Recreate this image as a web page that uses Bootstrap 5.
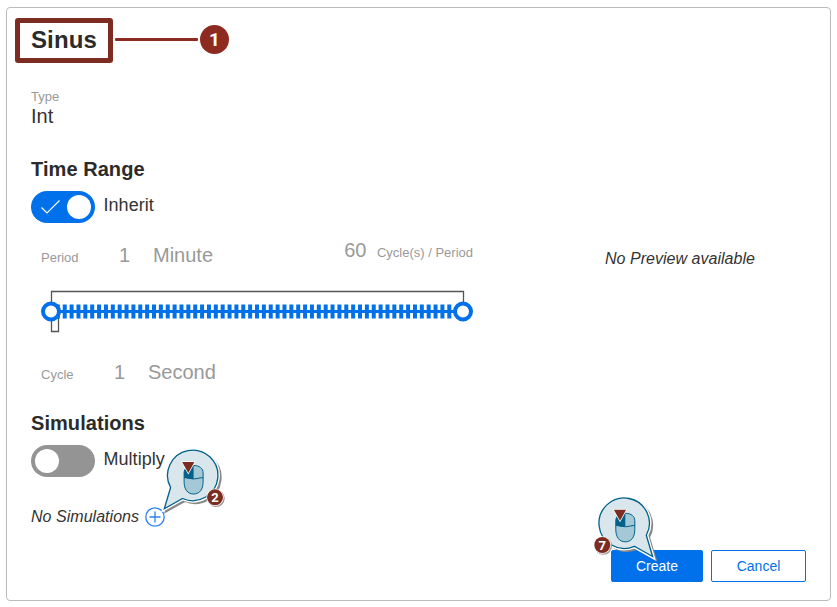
<!DOCTYPE html>
<html lang="en">
<head>
<meta charset="utf-8">
<meta name="viewport" content="width=device-width, initial-scale=1">
<title>Sinus</title>
<link href="https://cdn.jsdelivr.net/npm/bootstrap@5.3.0/dist/css/bootstrap.min.css" rel="stylesheet">
<style>
body{font-family:"Liberation Sans",Arial,sans-serif;color:#333;background:#fff;height:607px;overflow:hidden;padding:7px 6px 6px 6px;line-height:1}
.panel{height:594px;border:1px solid #bbb;border-radius:4px}
.title-row{margin:10px 0 0 8px;height:45px}
.title-frame{width:98px;height:45px;border:5px solid #7c2c20;border-radius:3px;padding-left:11px;font-size:24px;line-height:34px;font-weight:700;color:#2b2b2b;letter-spacing:.1px}
.pointer{width:83px;height:3px;background:#8e2b20;margin:0 2px;border-radius:1px;position:relative;top:-1px}
.num{width:29px;height:29px;background:#8e2b20;color:#fff;font:700 19px/29px Roboto,"Noto Sans",sans-serif;position:relative;top:-1px}
.body-col{width:466px;padding-left:24px}
.cap{font-size:13px;color:#999}
.val{font-size:20px}
.head{font-size:20px;font-weight:700;color:#2b2b2b;line-height:24px;margin:0;letter-spacing:.06px}
.lbl{font-size:18px;line-height:22px;margin-top:3px;letter-spacing:.04px}
.switch{width:64px;height:32px;border-radius:16px;padding:4px;background:#949494;margin-right:8.500px}
.switch.on{background:#0071eb}
.knob{width:24px;height:24px;border-radius:50%;background:#fff}
.dim{color:#999}
.metrics{width:432px;margin-left:10px}
.note{font-size:16px;font-style:italic;letter-spacing:.03px}
.preview{padding:186px 25px 0 82px;line-height:20px}
.act{height:32px;border-radius:2px;font-size:14px;line-height:18px;padding:6px 0}
.act-create{width:92px;background:#0071eb;color:#fff;border-color:#0071eb}
.act-cancel{width:95px;color:#0071eb;border-color:#0071eb;background:#fff}
.callout{position:absolute;overflow:visible;pointer-events:none}
</style>
</head>
<body class="position-relative">
<main class="panel d-flex flex-column">
  <div class="title-row d-flex align-items-center">
    <h1 class="title-frame m-0">Sinus</h1>
    <span class="pointer"></span>
    <span class="num rounded-circle text-center">1</span>
  </div>
  <div class="d-flex">
    <section class="body-col">
      <div class="cap" style="margin-top:27px;line-height:14px">Type</div>
      <div class="val" style="line-height:24px">Int</div>
      <h2 class="head" style="margin-top:29px">Time Range</h2>
      <div class="d-flex align-items-start" style="margin-top:10px">
        <div class="switch on d-flex justify-content-between">
          <svg width="32" height="24" viewBox="0 0 32 24"><path d="M6.500 12.500L12 18L24.500 5.500" fill="none" stroke="#fff" stroke-width="1.200"/></svg>
          <span class="knob"></span>
        </div>
        <span class="lbl">Inherit</span>
      </div>
      <div class="metrics d-flex dim" style="margin-top:15px;line-height:24px">
        <span class="cap" style="width:78px;padding-top:8px">Period</span>
        <span class="val" style="width:34px;padding-top:5px">1</span>
        <span class="val" style="padding-top:5px">Minute</span>
        <span class="val ms-auto">60</span>
        <span class="cap" style="padding-top:3px;margin-left:10.500px">Cycle(s) / Period</span>
      </div>
      <svg class="d-block metrics" style="margin-top:16px" width="432" height="48" viewBox="0 0 432 48">
        <path d="M10.500 24V5.500H422.500V24M10.500 24V45.500H17.500V28" fill="none" stroke="#555" stroke-width="1.300"/>
        <path d="M10 25.500H422" stroke="#0071eb" stroke-width="3"/>
        <path d="M14.870 25.500H412" stroke="#0071eb" stroke-width="14" stroke-dasharray="4 2.867"/>
        <circle cx="10" cy="25.500" r="8" fill="#fff" stroke="#0071eb" stroke-width="4"/>
        <circle cx="422" cy="25.500" r="8" fill="#fff" stroke="#0071eb" stroke-width="4"/>
      </svg>
      <div class="metrics d-flex dim" style="margin-top:26px;line-height:24px">
        <span class="cap" style="width:73px;padding-top:3px">Cycle</span>
        <span class="val" style="width:34px">1</span>
        <span class="val">Second</span>
      </div>
      <h2 class="head" style="margin-top:24px">Simulations</h2>
      <div class="d-flex align-items-start" style="margin-top:10px">
        <div class="switch"><span class="knob d-block"></span></div>
        <span class="lbl">Multiply</span>
      </div>
      <div class="note d-flex align-items-start" style="margin-top:30px">
        <span style="line-height:20px;padding-bottom:1px">No Simulations</span>
        <svg width="20" height="20" viewBox="0 0 20 20" style="margin-left:6px"><g fill="none" stroke="#2b82f0" stroke-width="1.300"><circle cx="10" cy="10" r="9.200"/><path d="M10 4.500V15.500M4.500 10H15.500"/></g></svg>
      </div>
    </section>
    <aside class="note preview flex-fill text-center">No Preview available</aside>
  </div>
  <footer class="d-flex justify-content-end gap-2" style="margin:22px 24px 0 0">
    <button class="btn act act-create" type="button">Create</button>
    <button class="btn act act-cancel" type="button">Cancel</button>
  </footer>
</main>

<svg class="callout" style="left:0;top:0" width="837" height="607" viewBox="0 0 837 607">
  <defs>
    <path id="bubble" d="M-22 12A25.200 25.200 0 1 1 -10 23L-28.300 33.200Z"/>
    <g id="mouse">
      <path d="M-9.500 -1.500V-4.500C-9.500 -9 -6 -12 0 -12S9.500 -9 9.500 -4.500V4C9.500 12 6 16.500 0 16.500S-9.500 12 -9.500 4Z" fill="#a5c8d7" stroke="#00618a" stroke-width="1"/>
      <path d="M-9.500 0V-4.500C-9.500 -9 -6 -12 0 -12V1.500Q-5 1.500 -9.500 0Z" fill="#00618a"/>
      <path d="M-9.500 0Q0 3 9.500 0" fill="none" stroke="#00618a"/>
      <path d="M-11.500 -15.500H.800L-5.300 -4.500Z" fill="#7c2c20" stroke="#fff" stroke-width="1.500" paint-order="stroke"/>
    </g>
  </defs>
  <g transform="translate(192.600 475.500)">
    <use href="#bubble" x="2.200" y="2" fill="#888" stroke="#888" stroke-width="3"/>
    <use href="#bubble" fill="#fff" stroke="#fff" stroke-width="4"/>
    <use href="#bubble" fill="#d9e6eb" stroke="#00618a" stroke-width="1.300"/>
    <use href="#mouse" x="1" y="2"/>
  </g>
  <g transform="translate(624.300 523.300)">
    <g transform="translate(2.200 2) scale(-1 1)"><use href="#bubble" fill="#888" stroke="#888" stroke-width="3"/></g>
    <g transform="scale(-1 1)"><use href="#bubble" fill="#fff" stroke="#fff" stroke-width="4"/><use href="#bubble" fill="#d9e6eb" stroke="#00618a" stroke-width="1.300"/></g>
    <use href="#mouse" x="1" y="2"/>
  </g>
  <g font-family="Roboto, Noto Sans, sans-serif" font-weight="700" font-size="13" fill="#fff" text-anchor="middle">
    <circle cx="216" cy="498.300" r="8.700" fill="#999"/><circle cx="215" cy="497.300" r="8.700"/><circle cx="215" cy="497.300" r="8" fill="#7c2c20"/><text x="215" y="502">2</text>
    <circle cx="603.300" cy="546" r="8.700" fill="#999"/><circle cx="602.300" cy="545" r="8.700"/><circle cx="602.300" cy="545" r="8" fill="#7c2c20"/><text x="602.300" y="549.700">7</text>
  </g>
</svg>
<script src="https://cdn.jsdelivr.net/npm/bootstrap@5.3.0/dist/js/bootstrap.bundle.min.js"></script>
</body>
</html>
